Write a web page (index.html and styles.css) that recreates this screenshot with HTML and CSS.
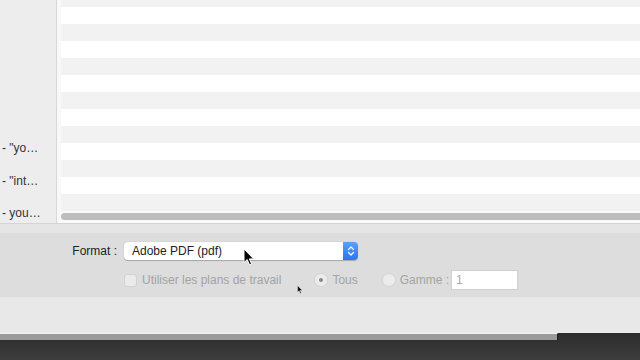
FILE: index.html
```html
<!DOCTYPE html>
<html lang="fr">
<head>
    <meta charset="UTF-8">
    <meta name="viewport" content="width=device-width, initial-scale=1.0">
    <title>Exporter</title>
    <link rel="stylesheet" href="styles.css">
</head>
<body>
    <div class="window">
        <div class="browser">
            <div class="sidebar">
                <div class="side-item">- &quot;yo…</div>
                <div class="side-item">- &quot;int…</div>
                <div class="side-item">- you…</div>
            </div>
            <div class="files">
                <div class="rows"></div>
                <div class="scroller"><div class="thumb"></div></div>
            </div>
        </div>

        <div class="strip"></div>

        <div class="options">
            <div class="opt-label">Format :</div>
            <div class="popup">
                <span class="popup-text">Adobe PDF (pdf)</span>
                <span class="stepper">
                    <svg width="8" height="12" viewBox="0 0 8 12">
                        <path d="M1.5 4.5 L4 2 L6.5 4.5 M1.5 7.5 L4 10 L6.5 7.5" fill="none" stroke="#fff" stroke-width="1.3" stroke-linecap="round" stroke-linejoin="round"/>
                    </svg>
                </span>
            </div>
            <div class="opt-row">
                <span class="check"></span>
                <span class="dim">Utiliser les plans de travail</span>
                <span class="radio on"></span>
                <span class="dim">Tous</span>
                <span class="radio"></span>
                <span class="dim">Gamme :</span>
                <span class="field">1</span>
            </div>
        </div>

        <div class="footer"></div>

        <div class="desk">
            <div class="behind"></div>
        </div>
    </div>

    <!-- pointeurs -->
    <svg class="cursor big" width="12" height="18" viewBox="0 0 12 18">
        <path d="M1 1 L1 14.5 L4.2 11.6 L6.6 16.8 L8.6 15.9 L6.3 10.9 L10.6 10.9 Z" fill="#000" stroke="#fff" stroke-width="1"/>
    </svg>
    <svg class="cursor small" width="6" height="9" viewBox="0 0 12 18">
        <path d="M1 1 L1 14.5 L4.2 11.6 L6.6 16.8 L8.6 15.9 L6.3 10.9 L10.6 10.9 Z" fill="#111" stroke="#ddd" stroke-width="1"/>
    </svg>
</body>
</html>
```

FILE: styles.css
```css
body {
    margin: 0;
    font-family: 'Liberation Sans', Arial, sans-serif;
    font-size: 12px;
    color: #262626;
    background: #333;
    overflow: hidden;
}
.window {
    width: 640px;
    height: 360px;
    display: flex;
    flex-direction: column;
}
.browser {
    height: 223px;
    display: flex;
}
.sidebar {
    width: 57px;
    background: #ededed;
    border-right: 1px solid #d8d8d8;
    padding-top: 132px;
    box-sizing: border-box;
    overflow: hidden;
}
.side-item {
    height: 32.5px;
    line-height: 32.5px;
    padding-left: 2px;
    color: #333;
    white-space: nowrap;
}
.files {
    flex: 1;
    display: flex;
    flex-direction: column;
    background: #f8f8f8;
    padding-left: 4px;
    overflow: hidden;
}
.rows {
    height: 211px;
    background: repeating-linear-gradient(#f2f2f2 0 17px, #fff 17px 34px);
    background-position: 0 -10px;
}
.scroller {
    height: 12px;
    background: #fafafa;
    padding-top: 2px;
    box-sizing: border-box;
}
.thumb {
    height: 7px;
    margin-right: -10px;
    border-radius: 4px;
    background: #bdbdbd;
}
.strip {
    height: 10px;
    background: #e5e5e5;
    border-top: 1px solid #d4d4d4;
    box-sizing: border-box;
}
.options {
    height: 64px;
    background: #dddddd;
    display: grid;
    grid-template-columns: 117px auto;
    column-gap: 7px;
    row-gap: 11px;
    align-content: start;
    padding-top: 9px;
    box-sizing: border-box;
}
.opt-label {
    text-align: right;
    line-height: 18px;
    color: #222;
}
.popup {
    width: 234px;
    height: 18px;
    display: flex;
    align-items: center;
    background: #fff;
    border-radius: 4px;
    box-shadow: 0 0.5px 1px rgba(0, 0, 0, 0.25);
}
.popup-text {
    flex: 1;
    padding-left: 8px;
    color: #222;
}
.stepper {
    width: 15px;
    height: 18px;
    display: flex;
    align-items: center;
    justify-content: center;
    border-radius: 0 4px 4px 0;
    background: linear-gradient(#5aa0fa, #2a74f3);
}
.opt-row {
    grid-column: 2;
    display: flex;
    align-items: center;
    height: 18px;
}
.dim {
    color: #a3a3a3;
}
.check {
    width: 11px;
    height: 11px;
    border: 1px solid #d2d2d2;
    border-radius: 3px;
    background: #ebebeb;
    margin-right: 5px;
}
.radio {
    width: 12px;
    height: 12px;
    border-radius: 50%;
    border: 1px solid #d4d4d4;
    background: #ececec;
    margin: 0 4px 0 33px;
    display: flex;
    align-items: center;
    justify-content: center;
}
.radio.on::after {
    content: '';
    width: 4px;
    height: 4px;
    border-radius: 50%;
    background: #8a8a8a;
}
.radio + .dim + .radio {
    margin-left: 24px;
}
.field {
    width: 61px;
    height: 18px;
    margin-left: 2px;
    padding-left: 4px;
    background: #fff;
    border: 0.5px solid #d0d0d0;
    color: #a8a8a8;
    line-height: 18px;
}
.footer {
    height: 36px;
    background: #e8e8e8;
}
.desk {
    flex: 1;
    background: linear-gradient(#2c2c2c, #3d3d3d);
}
.behind {
    width: 558px;
    height: 7px;
    background: #9a9a9a;
    border-top: 1px solid #f2f2f2;
    border-right: 1px solid #1e1e1e;
    box-sizing: border-box;
}
.cursor {
    position: absolute;
}
.cursor.big {
    left: 243px;
    top: 248px;
}
.cursor.small {
    left: 297px;
    top: 285px;
}
```
